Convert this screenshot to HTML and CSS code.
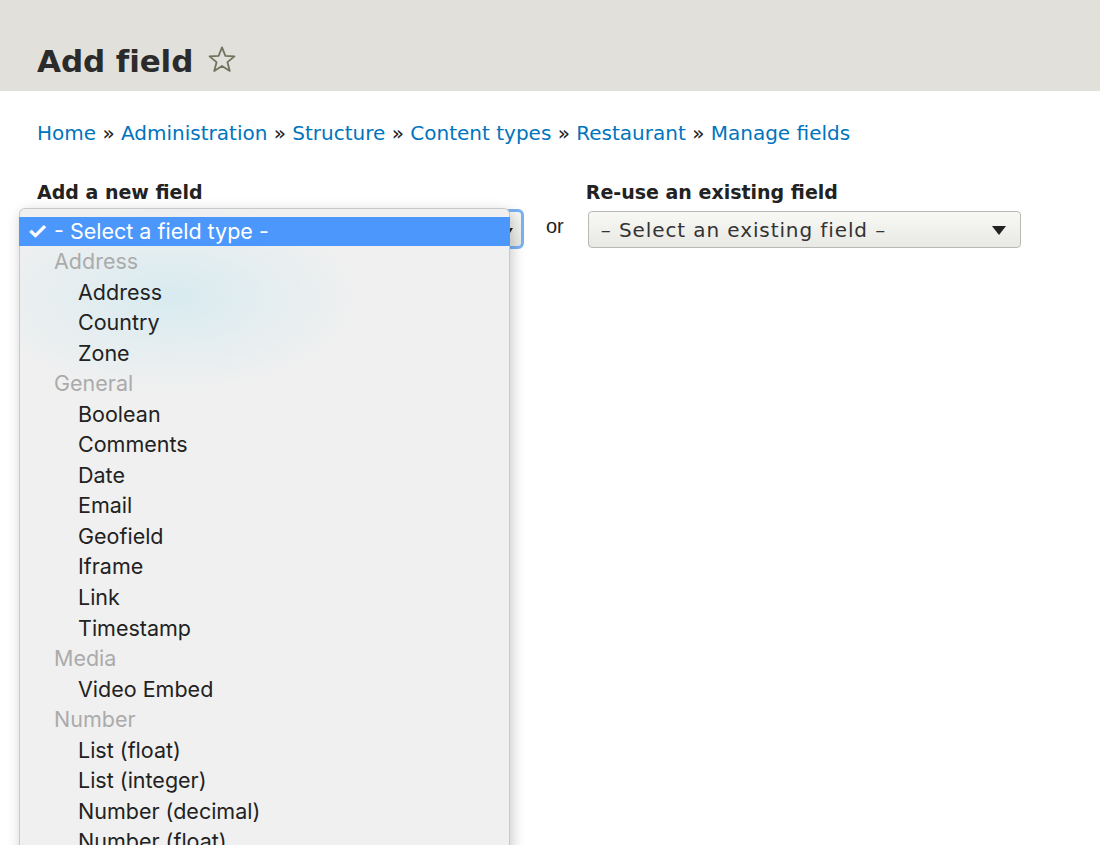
FILE: index.html
```html
<!DOCTYPE html>
<html lang="en">
<head>
<meta charset="utf-8">
<title>Add field</title>
<link rel="stylesheet" href="styles.css">
</head>
<body>
<header class="page-header">
  <h1 class="page-title">Add field</h1>
  <svg class="star" viewBox="0 0 32 32" width="30" height="30" aria-hidden="true">
    <path d="M16 2.5 L19.6 11.6 L29.3 12.1 L21.8 18.3 L24.3 27.7 L16 22.4 L7.7 27.7 L10.2 18.3 L2.7 12.1 L12.4 11.6 Z" fill="none" stroke="#72725f" stroke-width="1.9" stroke-linejoin="round"/>
  </svg>
</header>
<main class="content">
  <nav class="breadcrumb">
    <a href="#">Home</a> » <a href="#">Administration</a> » <a href="#">Structure</a> » <a href="#">Content types</a> » <a href="#">Restaurant</a> » <a href="#">Manage fields</a>
  </nav>
  <div class="field-row">
    <div class="field-col">
      <label class="field-label">Add a new field</label>
      <div class="select-wrap">
        <div class="select focused"><span class="select-arrow small"></span></div>
        <ul class="menu">
          <li class="menu-selected"><span class="check">✓</span>- Select a field type -</li>
          <li class="grp">Address</li>
          <li class="opt">Address</li>
          <li class="opt">Country</li>
          <li class="opt">Zone</li>
          <li class="grp">General</li>
          <li class="opt">Boolean</li>
          <li class="opt">Comments</li>
          <li class="opt">Date</li>
          <li class="opt">Email</li>
          <li class="opt">Geofield</li>
          <li class="opt">Iframe</li>
          <li class="opt">Link</li>
          <li class="opt">Timestamp</li>
          <li class="grp">Media</li>
          <li class="opt">Video Embed</li>
          <li class="grp">Number</li>
          <li class="opt">List (float)</li>
          <li class="opt">List (integer)</li>
          <li class="opt">Number (decimal)</li>
          <li class="opt">Number (float)</li>
        </ul>
      </div>
    </div>
    <span class="or">or</span>
    <div class="field-col right">
      <label class="field-label">Re-use an existing field</label>
      <div class="select existing"><span class="select-text">– Select an existing field –</span><span class="select-arrow"></span></div>
    </div>
  </div>
</main>
</body>
</html>
```

FILE: styles.css
```css
html, body {
  margin: 0;
  padding: 0;
  height: 845px;
  overflow: hidden;
  background: #fff;
}
body {
  font-family: "DejaVu Sans", sans-serif;
  color: #222;
}
.page-header {
  background: #e1e0da;
  height: 91px;
  display: flex;
  align-items: center;
  padding-left: 37px;
  box-sizing: border-box;
  padding-top: 30px;
}
.page-title {
  margin: 0;
  font-size: 31px;
  font-weight: bold;
  color: #2b2b2b;
  letter-spacing: -0.1px;
}
.star {
  margin-left: 14px;
  margin-top: -1px;
}
.content {
  padding: 0 37px;
}
.breadcrumb {
  margin-top: 30px;
  font-size: 20px;
  line-height: 24px;
  color: #222;
}
.breadcrumb a {
  color: #0074bd;
  text-decoration: none;
}
.field-row {
  display: flex;
  align-items: flex-start;
  margin-top: 35px;
}
.field-col {
  display: flex;
  flex-direction: column;
}
.field-label {
  font-weight: bold;
  font-size: 19px;
  line-height: 24px;
  color: #222;
  margin-bottom: 7px;
}
.select-wrap {
  position: relative;
  width: 487px;
  height: 37px;
}
.select {
  box-sizing: border-box;
  height: 37px;
  border: 1px solid #b8b8b5;
  border-radius: 4px;
  background: linear-gradient(#f8f8f6, #e8e8e4);
  display: flex;
  align-items: center;
  position: relative;
}
.select.focused {
  width: 487px;
  border: 3px solid #79b2f4;
  border-radius: 6px;
  height: 40px;
  margin-top: -2px;
}
.select-arrow {
  position: absolute;
  right: 14px;
  top: 50%;
  margin-top: -4px;
  border-left: 7px solid transparent;
  border-right: 7px solid transparent;
  border-top: 9px solid #222;
}
.select-arrow.small {
  right: 8px;
  border-left-width: 3px;
  border-right-width: 3px;
  border-top-width: 5px;
  margin-top: -1px;
}
.select.existing {
  width: 433px;
  margin-left: 2px;
  font-size: 20px;
  letter-spacing: 0.9px;
  color: #333;
}
.select-text {
  padding-left: 12px;
}
.or {
  font-family: "Liberation Sans", Arial, sans-serif;
  font-size: 20px;
  color: #222;
  margin: 35px 22px 0 22px;
}
.menu {
  position: absolute;
  left: -18px;
  top: -3px;
  width: 491px;
  height: 700px;
  margin: 0;
  padding: 8px 0 0;
  list-style: none;
  box-sizing: border-box;
  border: 1px solid #c9c9c9;
  border-bottom: none;
  border-radius: 6px 6px 0 0;
  background:
    radial-gradient(ellipse 190px 95px at 150px 88px, rgba(212, 234, 240, 0.85), rgba(212, 234, 240, 0) 100%),
    #f0f0f0;
  box-shadow: 2px 4px 14px rgba(0, 0, 0, 0.22);
  font-family: Inter, "Liberation Sans", sans-serif;
  font-size: 21.5px;
  color: #222;
}
.menu li {
  height: 30.55px;
  line-height: 30.55px;
  white-space: nowrap;
}
.menu .menu-selected {
  background: #4c97fb;
  color: #fff;
  height: 29px;
  line-height: 29px;
  margin: 0 -1px 0 -1px;
  padding-left: 8px;
}
.check {
  display: inline-block;
  width: 27px;
  font-size: 23px;
  font-weight: bold;
}
.menu .grp {
  color: #ababab;
  padding-left: 34px;
}
.menu .opt {
  padding-left: 58px;
}
```
